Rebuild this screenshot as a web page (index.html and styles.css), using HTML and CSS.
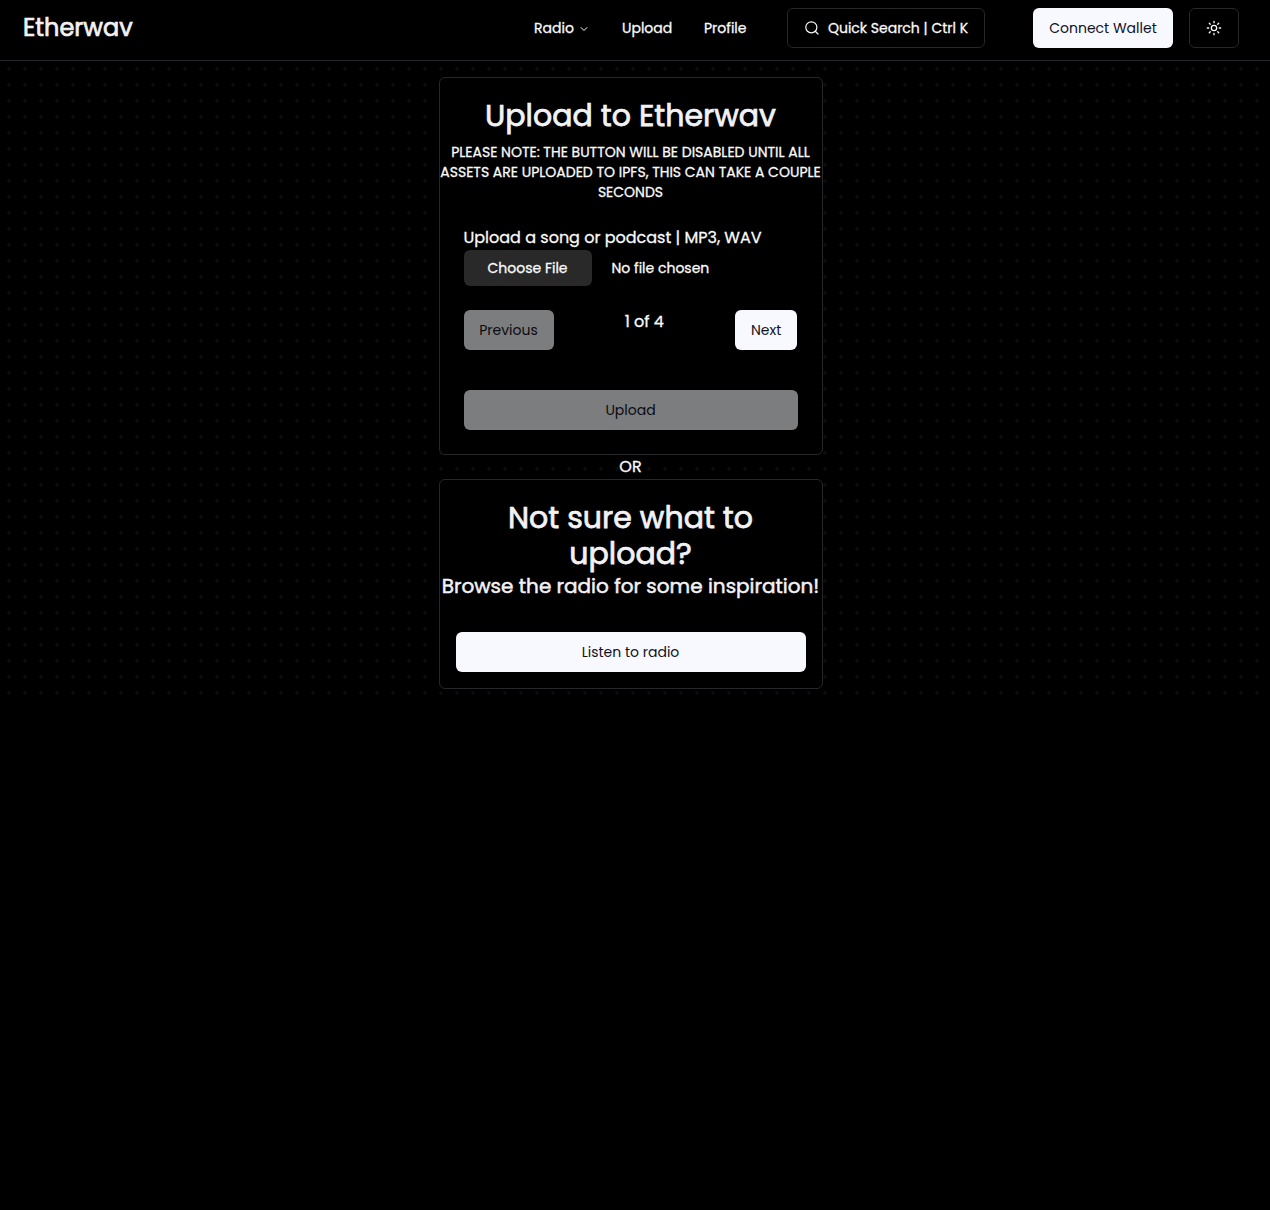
FILE: index.html
```html
<!DOCTYPE html>
<html lang="en">
<head>
<meta charset="utf-8">
<title>Etherwav</title>
<link rel="stylesheet" href="styles.css">
</head>
<body>
<header class="header">
  <a class="brand">Etherwav</a>
  <nav class="nav">
    <a class="nav-item nav-radio"><span>Radio</span>
      <svg class="chevron" viewBox="0 0 24 24" fill="none" stroke="currentColor" stroke-width="2" stroke-linecap="round" stroke-linejoin="round"><path d="m6 9 6 6 6-6"/></svg>
    </a>
    <a class="nav-item nav-upload">Upload</a>
    <a class="nav-item nav-profile">Profile</a>
  </nav>
  <button class="outline search">
    <svg class="icon" viewBox="0 0 24 24" fill="none" stroke="currentColor" stroke-width="1.8" stroke-linecap="round" stroke-linejoin="round"><circle cx="11" cy="11" r="8.3"/><path d="m21 21-4.1-4.1"/></svg>
    <span>Quick Search | Ctrl K</span>
  </button>
  <button class="button connect">Connect Wallet</button>
  <button class="outline theme" aria-label="Toggle theme">
    <svg class="icon" viewBox="0 0 24 24" fill="none" stroke="currentColor" stroke-width="2" stroke-linecap="round" stroke-linejoin="round"><circle cx="12" cy="12" r="4"/><path d="M12 2v2M12 20v2M4.93 4.93l1.41 1.41M17.66 17.66l1.41 1.41M2 12h2M20 12h2M6.34 17.66l-1.41 1.41M19.07 4.93l-1.41 1.41"/></svg>
  </button>
</header>
<main class="main">
  <section class="card">
    <h1 class="title">Upload to Etherwav</h1>
    <p class="note">PLEASE NOTE: THE BUTTON WILL BE DISABLED UNTIL ALL ASSETS ARE UPLOADED TO IPFS, THIS CAN TAKE A COUPLE SECONDS</p>
    <div class="form">
      <div>Upload a song or podcast | MP3, WAV</div>
      <div class="file"><button class="choose">Choose File</button><span>No file chosen</span></div>
      <div class="pager">
        <button class="button previous" disabled>Previous</button>
        <span>1 of 4</span>
        <button class="button next">Next</button>
      </div>
      <button class="button submit" disabled>Upload</button>
    </div>
  </section>
  <div>OR</div>
  <section class="card radio-card">
    <h2 class="title">Not sure what to upload?</h2>
    <p class="subtitle">Browse the radio for some inspiration!</p>
    <button class="button listen">Listen to radio</button>
  </section>
</main>
</body>
</html>
```
FILE: styles.css
```css
* { box-sizing: border-box; }
body {
  margin: 0;
  background: #000;
  color: #fafafa;
  font: 400 16px/24px "Poppins", "Inter", sans-serif;
  -webkit-text-stroke: 0.28px currentColor;
}
h1, h2, p { margin: 0; }
button { font: inherit; color: inherit; padding: 0; border: 0; background: none; }

.header {
  display: flex;
  align-items: center;
  height: 61px;
  padding: 0 31px 4px 23px;
  border-bottom: 1px solid #242426;
  font-size: 14px;
  line-height: 20px;
}
.brand { margin-right: auto; font-size: 24px; line-height: 32px; -webkit-text-stroke-width: 0.7px; color: #f2f2f4; }
.nav { display: flex; margin-right: 24px; }
.nav-item { padding-left: 16px; white-space: nowrap; }
.nav-radio { display: flex; align-items: center; width: 88px; }
.nav-upload { width: 82px; }
.nav-profile { width: 75px; }
.chevron { width: 12px; height: 12px; margin: 2px 0 0 4px; }
.icon { width: 16px; height: 16px; }
.outline {
  display: flex;
  align-items: center;
  justify-content: center;
  height: 40px;
  border: 1px solid #27272a;
  border-radius: 6px;
}
.search { width: 198px; gap: 8px; margin-right: 48px; white-space: nowrap; }
.theme { width: 50px; margin-left: 16px; }

.button {
  height: 40px;
  border-radius: 6px;
  background: #f8f9fe;
  color: #11111d;
  font-size: 14px;
  line-height: 20px;
  -webkit-text-stroke-width: 0;
}
.button:disabled { background: #7c7d7f; color: #0b0b12; }
.connect { width: 140px; }

.main {
  display: flex;
  flex-direction: column;
  align-items: center;
  padding: 16px 9px 8px 0;
  background: radial-gradient(circle at 9px 8px, #0c0c0c 0, #0c0c0c 1.4px, transparent 2.2px) 0 0 / 16px 16px;
}
.card {
  width: 384px;
  padding-top: 20px;
  border: 1px solid #27272a;
  border-radius: 6px;
  background: #000;
  text-align: center;
}
.title { padding: 0 24px; font-size: 30px; line-height: 36px; font-weight: 400; -webkit-text-stroke-width: 0.75px; color: #f2f2f4; }
.note { margin-top: 8px; font-size: 14px; line-height: 20px; }
.form { padding: 24px; text-align: left; }
.file { display: flex; align-items: center; gap: 20px; font-size: 14px; line-height: 20px; }
.choose { width: 128px; height: 36px; border-radius: 6px; background: #292929; }
.pager { display: flex; justify-content: space-between; margin: 24px 0.4px 40px 0; }
.previous { width: 90px; }
.next { width: 62px; }
.submit { display: block; width: 100%; }
.radio-card { padding-bottom: 16px; }
.subtitle { font-size: 20px; line-height: 28px; -webkit-text-stroke-width: 0.5px; white-space: nowrap; color: #f2f2f4; }
.listen { display: block; width: 350px; margin: 32px 0 0 16px; }
```
